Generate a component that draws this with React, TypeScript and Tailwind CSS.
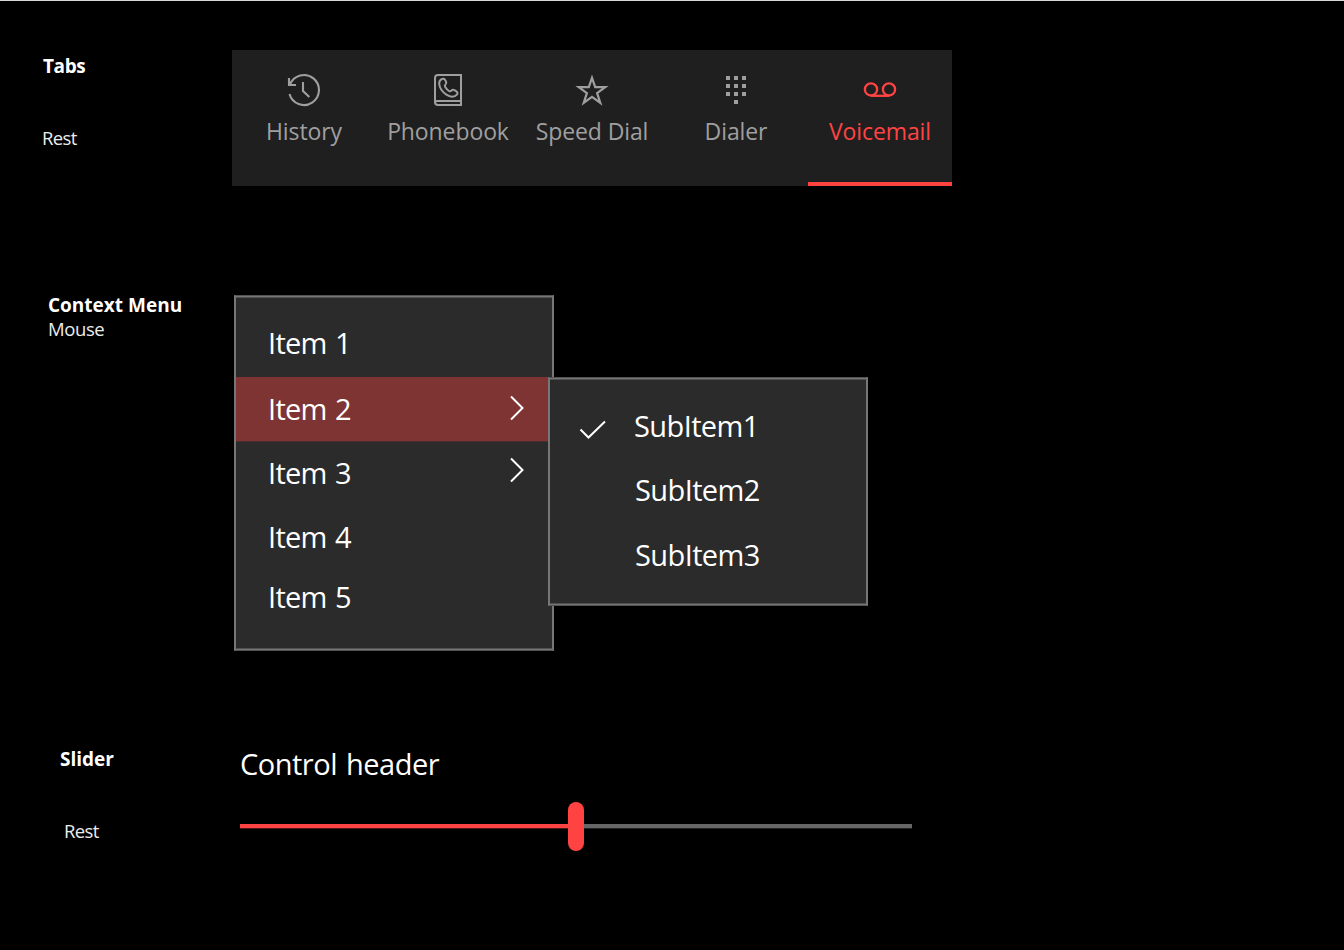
import type { ReactNode } from "react";

function HistoryIcon() {
  return (
    <svg width="34" height="34" viewBox="0 0 34 34" fill="none" stroke="currentColor" strokeWidth="2.1">
      <path d="M2.500 21A15 15 0 1 0 3 11.500" />
      <path d="M2 5v7h7" />
      <path d="M16 9v9l6.300 6" />
    </svg>
  );
}

function PhonebookIcon() {
  return (
    <svg width="34" height="34" viewBox="0 0 34 34" fill="none" stroke="currentColor" strokeWidth="2">
      <path d="M30 2H7a3 3 0 0 0-3 3v24a3 3 0 0 0 3 3h23zM4 30a2 2 0 0 1 2-2h24" />
      <path
        strokeWidth="2"
        transform="translate(1 .3)"
        d="M9.600 5.900c1.300-1 2.800-.5 3.500.7l1 1.900c.6 1.200.3 2-.6 2.800-1 .9-.9 1.500-.3 2.500 1 1.600 2.200 2.900 3.800 3.900 1 .6 1.600.5 2.400-.4.900-1 1.800-1.200 3-.5l2 1.200c1.300.8 1.500 2.300.5 3.400-2.600 3-7 2.300-10.500-.1C10.700 18.700 7.500 14.500 7.200 10.400 7.100 8.500 7.900 7 9.600 5.900z"
      />
    </svg>
  );
}

function StarIcon() {
  return (
    <svg width="34" height="34" viewBox="0 0 34 34" fill="none" stroke="currentColor" strokeWidth="2.2">
      <path d="M17 4.800L20.200 14.100H30.300L22.100 20.100L25.300 29.900L17 23.900L8.700 29.900L11.900 20.100L3.700 14.100H13.800Z" />
    </svg>
  );
}

function DialerIcon() {
  const dots = [
    [7, 3], [15, 3], [23, 3],
    [7, 11], [15, 11], [23, 11],
    [7, 19], [15, 19], [23, 19],
    [15, 27],
  ];
  return (
    <svg width="34" height="34" viewBox="0 0 34 34" fill="currentColor">
      {dots.map(([x, y]) => (
        <rect key={`${x}-${y}`} x={x} y={y} width="4" height="4" />
      ))}
    </svg>
  );
}

function VoicemailIcon() {
  return (
    <svg width="34" height="34" viewBox="0 0 34 34" fill="none" stroke="currentColor" strokeWidth="2.300">
      <circle cx="8" cy="16.400" r="6.100" />
      <circle cx="26" cy="16.400" r="6.100" />
      <path d="M8 22.800h18" />
    </svg>
  );
}

function Chevron() {
  return (
    <svg width="16" height="26" viewBox="0 0 16 26" fill="none" stroke="currentColor" strokeWidth="2">
      <path d="M2 1.500L13.500 13L2 24.500" />
    </svg>
  );
}

function Check() {
  return (
    <svg width="28" height="20" viewBox="0 0 28 20" fill="none" stroke="currentColor" strokeWidth="2">
      <path d="M1.500 9.500L9.500 17.500L26 1.500" />
    </svg>
  );
}

function Tab({ label, icon, active }: { label: string; icon: ReactNode; active?: boolean }) {
  return (
    <button
      className={
        active
          ? "flex w-36 flex-col items-center border-b-4 border-[#ff4343] pt-[23px] text-[#ff4343]"
          : "flex w-36 flex-col items-center border-b-4 border-transparent pt-[23px] text-[#9f9f9f]"
      }
    >
      {icon}
      <span className="mt-2 text-[23px] leading-8 tracking-[-0.1px] whitespace-nowrap">{label}</span>
    </button>
  );
}

function MenuItem({ label, className, children }: { label: string; className: string; children?: ReactNode }) {
  return (
    <li className={`flex justify-between pr-[27px] pl-8 ${className}`}>
      <span>{label}</span>
      {children}
    </li>
  );
}

export default function App() {
  return (
    <main className="h-[950px] w-[1344px] overflow-hidden border-t border-[#d8d8d8] bg-black font-['Open_Sans',sans-serif] text-white">
      <section className="flex pt-[49px]">
        <div className="w-[232px] pl-[42px] text-[19px] leading-6">
          <h2 className="mt-1 pl-px font-bold tracking-[-0.4px]">Tabs</h2>
          <p className="mt-12 text-[18.500px] tracking-[-0.6px] text-[#ececec]">Rest</p>
        </div>
        <nav className="flex h-[136px] bg-[#1f1f1f]">
          <Tab label="History" icon={<HistoryIcon />} />
          <Tab label="Phonebook" icon={<PhonebookIcon />} />
          <Tab label="Speed Dial" icon={<StarIcon />} />
          <Tab label="Dialer" icon={<DialerIcon />} />
          <Tab label="Voicemail" icon={<VoicemailIcon />} active />
        </nav>
      </section>

      <section className="flex pt-[109px]">
        <div className="w-[234px] pl-12 text-[19px] leading-6">
          <h2 className="-mt-[2px] font-bold">Context Menu</h2>
          <p className="text-[18.500px] tracking-[-0.4px] text-[#ececec]">Mouse</p>
        </div>
        <div className="relative h-[356px] w-80 border-x-2 border-y border-x-[#767676] border-y-[#525252] bg-[#2b2b2b] text-[29px] shadow-[inset_0_1px_#767676,inset_0_-1px_#767676,inset_0_2px_#505050,inset_0_-2px_#505050]">
          <ul className="pt-px tracking-[-0.7px] [word-spacing:1.5px]">
            <MenuItem label="Item 1" className="h-20 pt-[14px] leading-[64px]" />
            <MenuItem label="Item 2" className="h-[65px] items-center border-b border-[#4a2e2e] bg-[#7f3434] leading-[64px]">
              <span className="-mt-[2px]">
                <Chevron />
              </span>
            </MenuItem>
            <MenuItem label="Item 3" className="h-[63px] -translate-y-px items-center leading-[63px]">
              <span className="-mt-[5px]">
                <Chevron />
              </span>
            </MenuItem>
            <MenuItem label="Item 4" className="h-[60px] leading-[64px]" />
            <MenuItem label="Item 5" className="h-16 leading-[64px]" />
          </ul>
          <ul className="absolute top-[81px] left-[312px] h-[229px] w-80 border-x-2 border-y border-x-[#767676] border-y-[#525252] bg-[#2b2b2b] pt-4 leading-[64px] tracking-[-0.6px] shadow-[inset_0_1px_#767676,inset_0_-1px_#767676,inset_0_2px_#505050,inset_0_-2px_#505050]">
            <li className="flex">
              <span className="w-[84px] pt-[26px] pl-[29px]">
                <Check />
              </span>
              <span>SubItem1</span>
            </li>
            <li className="pl-[85px]">SubItem2</li>
            <li className="pt-px pl-[85px]">SubItem3</li>
          </ul>
        </div>
      </section>

      <section className="flex pt-[93px]">
        <div className="w-60 pl-[60px] text-[19px] leading-6">
          <h2 className="mt-[3px] font-bold">Slider</h2>
          <p className="mt-12 pl-1 text-[18.500px] tracking-[-0.6px] text-[#ececec]">Rest</p>
        </div>
        <div className="w-[672px]">
          <h3 className="text-[29px] leading-10 tracking-[-0.5px] [word-spacing:2px]">Control header</h3>
          <div className="mt-[18px] flex items-center">
            <span className="h-[5px] w-[328px] border-b border-[#501515] bg-[#ff4343]" />
            <span className="h-[49px] w-4 rounded-full bg-[#ff4343]" />
            <span className="h-[5px] flex-1 border-b border-[#222222] bg-[#666666]" />
          </div>
        </div>
      </section>
    </main>
  );
}
